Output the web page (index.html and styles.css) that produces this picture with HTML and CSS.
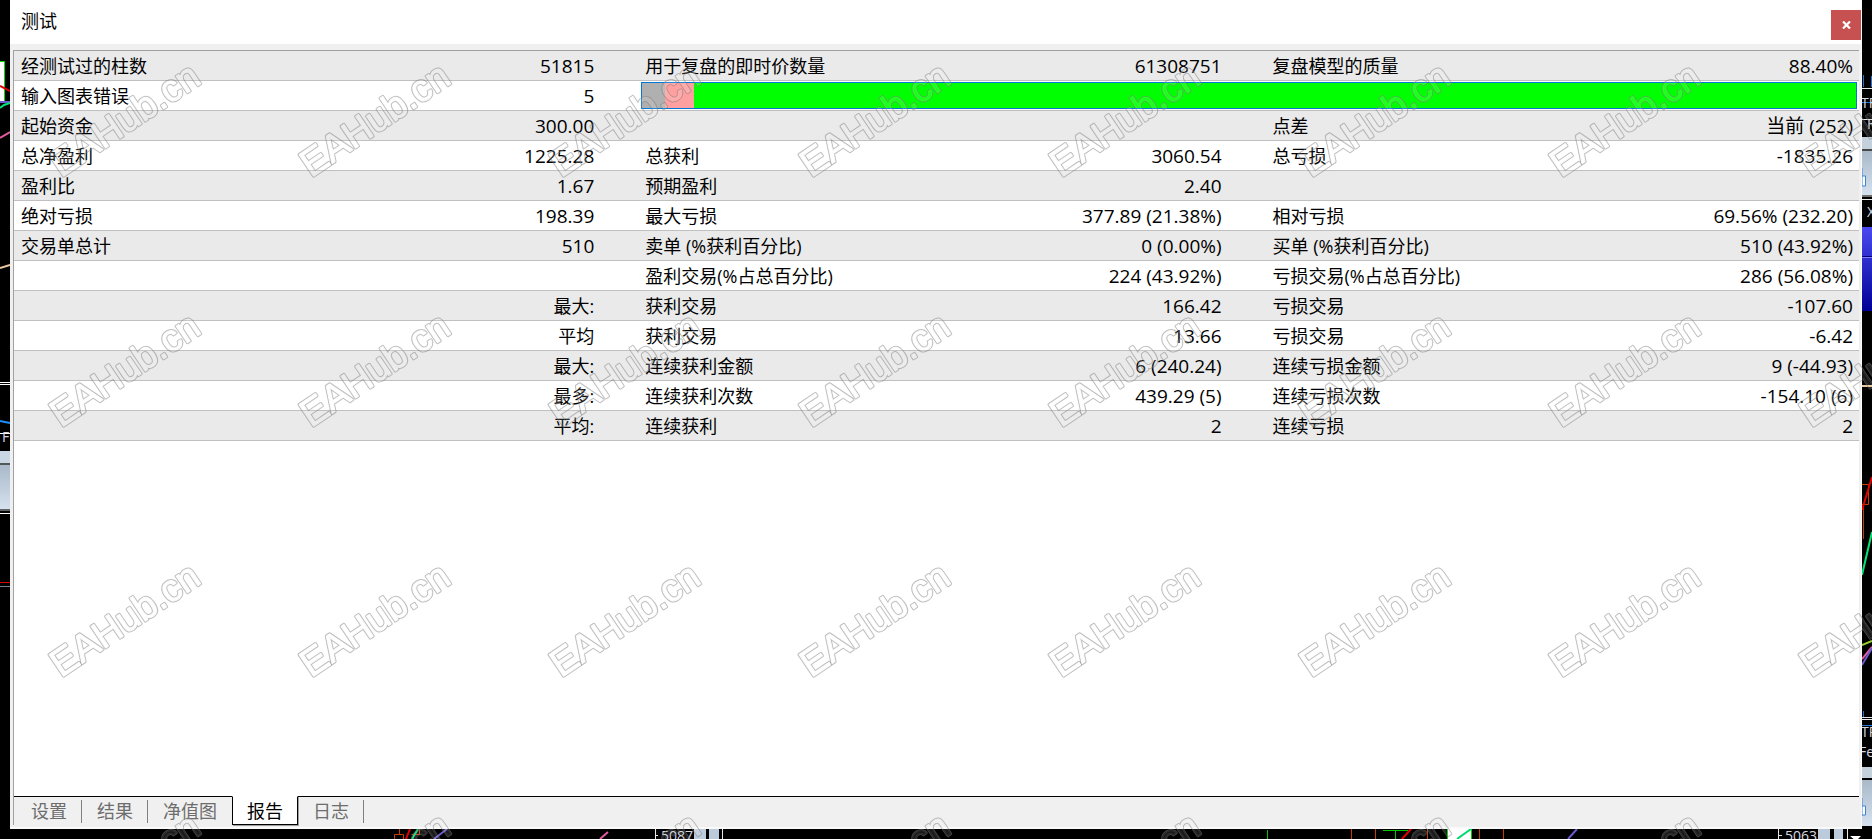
FILE: index.html
```html
<!DOCTYPE html>
<html lang="zh-CN">
<head>
    <meta charset="UTF-8">
    <meta name="viewport" content="width=device-width, initial-scale=1.0">
    <title>测试</title>
    <link rel="stylesheet" href="styles.css">
</head>
<body>
    <!-- chart edges behind the tester window -->
    <svg class="chart chart-left" aria-hidden="true">
        <defs>
            <linearGradient id="steel" x1="0" y1="0" x2="0" y2="1">
                <stop offset="0" stop-color="#a9b9c9"/>
                <stop offset="1" stop-color="#d5e1ee"/>
            </linearGradient>
            <linearGradient id="caption" x1="0" y1="0" x2="0" y2="1">
                <stop offset="0" stop-color="#4a4af0"/>
                <stop offset="1" stop-color="#000096"/>
            </linearGradient>
        </defs>
        <path d="M-2 61.500H4.500V102H-2z" fill="#fff" stroke="#00e000"/>
        <g fill="none" stroke-width="2">
            <path d="M0 86l10 5" stroke="#e00000"/>
            <path d="M0 102h10" stroke="#6a5acd"/>
            <path d="M0 108l4-3 6-2" stroke="#00e676"/>
            <path d="M0 138l10-6" stroke="#e85aa0"/>
            <path d="M0 268l10-3" stroke="#e8c8a0"/>
            <path d="M0 421l10 2" stroke="#1e90ff"/>
        </g>
        <path d="M0 382.500h10M0 384.500h10M0 433.500h10M0 513.500h10" stroke="#fff"/>
        <text x="2" y="442" class="chart-text">F</text>
        <rect y="451" width="10" height="12" fill="#c9d6e4"/>
        <rect y="463" width="10" height="2" fill="#505858"/>
        <rect y="465" width="10" height="44" fill="url(#steel)"/>
        <rect y="509" width="10" height="2" fill="#606468"/>
        <path d="M0 582.500h10" stroke="#e00000"/>
        <path d="M0 586.500h10" stroke="#708090"/>
    </svg>

    <main class="window">
        <header class="title-bar">
            <h1 class="title">测试</h1>
            <button class="close" type="button" aria-label="关闭">
                <svg width="9" height="8" viewBox="0 0 9 8"><path d="M1 0.500l7 7M8 0.500l-7 7" stroke="#fff" stroke-width="2.200"/></svg>
            </button>
        </header>

        <section class="panel">
            <div class="report">
                <table class="report-table">
                    <colgroup>
                        <col class="col-label"><col class="col-value">
                        <col class="col-label"><col class="col-value">
                        <col class="col-label"><col class="col-last">
                    </colgroup>
                    <tbody>
                        <tr><th>经测试过的柱数</th><td>51815</td><th>用于复盘的即时价数量</th><td>61308751</td><th>复盘模型的质量</th><td>88.40%</td></tr>
                        <tr>
                            <th>输入图表错误</th><td>5</td>
                            <td class="quality-cell" colspan="4">
                                <div class="quality">
                                    <span class="quality-none" style="width: 1.9%"></span>
                                    <span class="quality-low" style="width: 2.4%"></span>
                                </div>
                            </td>
                        </tr>
                        <tr><th>起始资金</th><td>300.00</td><th></th><td></td><th>点差</th><td>当前 (252)</td></tr>
                        <tr><th>总净盈利</th><td>1225.28</td><th>总获利</th><td>3060.54</td><th>总亏损</th><td>-1835.26</td></tr>
                        <tr><th>盈利比</th><td>1.67</td><th>预期盈利</th><td>2.40</td><th></th><td></td></tr>
                        <tr><th>绝对亏损</th><td>198.39</td><th>最大亏损</th><td>377.89 (21.38%)</td><th>相对亏损</th><td>69.56% (232.20)</td></tr>
                        <tr><th>交易单总计</th><td>510</td><th>卖单 (%获利百分比)</th><td>0 (0.00%)</td><th>买单 (%获利百分比)</th><td>510 (43.92%)</td></tr>
                        <tr><th></th><td></td><th>盈利交易(%占总百分比)</th><td>224 (43.92%)</td><th>亏损交易(%占总百分比)</th><td>286 (56.08%)</td></tr>
                        <tr><th></th><td class="caption">最大:</td><th>获利交易</th><td>166.42</td><th>亏损交易</th><td>-107.60</td></tr>
                        <tr><th></th><td class="caption">平均</td><th>获利交易</th><td>13.66</td><th>亏损交易</th><td>-6.42</td></tr>
                        <tr><th></th><td class="caption">最大:</td><th>连续获利金额</th><td>6 (240.24)</td><th>连续亏损金额</th><td>9 (-44.93)</td></tr>
                        <tr><th></th><td class="caption">最多:</td><th>连续获利次数</th><td>439.29 (5)</td><th>连续亏损次数</th><td>-154.10 (6)</td></tr>
                        <tr><th></th><td class="caption">平均:</td><th>连续获利</th><td>2</td><th>连续亏损</th><td>2</td></tr>
                    </tbody>
                </table>
            </div>

            <nav class="tabs">
                <button class="tab" type="button">设置</button>
                <button class="tab" type="button">结果</button>
                <button class="tab no-rule" type="button">净值图</button>
                <button class="tab active" type="button">报告</button>
                <button class="tab" type="button">日志</button>
                <span class="tabs-rest"></span>
            </nav>
        </section>
    </main>

    <svg class="chart chart-right" aria-hidden="true">
        <path d="M1.500 75v12M9.500 76v11M0 102.500h10M1.500 711v6M0 725.500h10" stroke="#1e78d8"/>
        <path d="M0 88.500h10M0 119.500h10M0 199.500h10M0 717.500h10M0 719.500h10" stroke="#e8e8e8"/>
        <text x="-1" y="108" class="chart-text">TF</text>
        <text x="5" y="129" class="chart-text">F</text>
        <rect y="137" width="10" height="12" fill="#c5d0dd"/>
        <rect y="149" width="10" height="2" fill="#484848"/>
        <rect y="151" width="10" height="44" fill="url(#steel)"/>
        <path d="M0 168v18M0 176h3.500v10H0" fill="#fff" stroke="#3c82d2"/>
        <rect y="195" width="10" height="2" fill="#707070"/>
        <text x="5" y="217" class="chart-text">X</text>
        <rect y="227" width="10" height="84" fill="url(#caption)"/>
        <path d="M0 256.500h10" stroke="#000078"/>
        <path d="M0 257.500h10" stroke="#8080ff"/>
        <g fill="none" stroke-width="2">
            <path d="M0 386h10" stroke="#e8c8a0"/>
            <path d="M0 484.500h6.500v20H0M1.500 504v35" stroke="#c83c00" stroke-width="1"/>
            <path d="M0 510l10-33" stroke="#e00000"/>
            <path d="M0 575l10-43" stroke="#00e676"/>
            <path d="M0 645l10-4" stroke="#9acd32"/>
            <path d="M0 659l10-12" stroke="#e85aa0"/>
            <path d="M0 665l10-17" stroke="#6a5acd"/>
        </g>
        <text x="-1" y="737" class="chart-text">TR</text>
        <text x="-3" y="757" class="chart-text">Fe</text>
        <rect y="767" width="10" height="11" fill="#c5d0dd"/>
        <rect y="780" width="10" height="46" fill="url(#steel)"/>
        <path d="M0 798v18M0 806h3.500v9H0" fill="#fff" stroke="#3c82d2"/>
    </svg>

    <svg class="chart chart-bottom" aria-hidden="true">
        <g fill="none" stroke="#c83c00">
            <path d="M394.500 10V5.500h9V10M399.500 0v5M411.500 5.500h8V0M1351.500 0v10M1375.500 0v10M1427.500 0v10M1479.500 0v10M1503.500 0v10"/>
        </g>
        <path d="M1267.500 1v9M1383 1.500h25M1395.500 1v9" stroke="#00c800"/>
        <rect x="1447" width="25" height="10" fill="#fff"/>
        <path d="M1447.500 0v10M1471.500 0v10" stroke="#00c800"/>
        <g fill="none" stroke-width="2">
            <path d="M406 10l4-10M1402 10l9-10" stroke="#e00000"/>
            <path d="M412 10l6-10M1457 10l14-10" stroke="#00d870"/>
            <path d="M434 10l13-10M1568 10l9-10" stroke="#6a5acd"/>
            <path d="M600 10l8-7" stroke="#e85aa0"/>
        </g>
        <path d="M655.500 0v10M655 6.500h3M722.500 0v10M1778.500 0v10M1779 6.500h3M1847.500 0v10" stroke="#e8e8e8"/>
        <text x="661" y="12" class="chart-text">5087</text>
        <text x="1785" y="12" class="chart-text">5063</text>
        <path d="M694 0h12v10h-12zM709 0h10v10h-10zM1818 0h12v10h-12zM1834 0h9v10h-9z" fill="#bccbdc"/>
        <path d="M1850 7h11l-5 5z" fill="#fff"/>
    </svg>

    <!-- tiled watermark over everything -->
    <svg class="watermark" aria-hidden="true">
        <defs>
            <mask id="hollow" maskUnits="userSpaceOnUse" x="0" y="0" width="250" height="250">
                <rect width="250" height="250" fill="#fff"/>
                <text class="mark mark-inner" transform="translate(61 178) rotate(-34)">EAHub.cn</text>
            </mask>
            <pattern id="tile" width="250" height="250" patternUnits="userSpaceOnUse">
                <text class="mark mark-fill" transform="translate(61 178) rotate(-34)">EAHub.cn</text>
                <g mask="url(#hollow)">
                    <text class="mark mark-outer" transform="translate(61 178) rotate(-34)">EAHub.cn</text>
                </g>
            </pattern>
        </defs>
        <rect width="100%" height="100%" fill="url(#tile)"/>
    </svg>
</body>
</html>
```

FILE: styles.css
```css
:root {
    --face: #f0f0f0;
    --stripe: #eaeaea;
    --rule: #c0c0c0;
    --edge: #a0a0a0;
    --close: #c75050;
}

* {
    margin: 0;
    padding: 0;
    box-sizing: border-box;
}

body {
    display: grid;
    grid-template-columns: 10px 1fr 10px;
    grid-template-rows: 1fr 10px;
    height: 100vh;
    overflow: hidden;
    background: #000;
    color: #000;
    font-family: "Open Sans", "Noto Sans CJK SC", sans-serif;
    font-size: 18px;
}

.chart {
    display: block;
    width: 100%;
    height: 100%;
    overflow: hidden;
}

.chart-bottom {
    grid-column: 1 / -1;
}

.chart-text {
    font-family: "Open Sans", sans-serif;
    font-size: 14px;
    fill: #d8d8e0;
}

.window {
    display: flex;
    flex-direction: column;
    background: var(--face);
    border-bottom: 2px solid #fafafa;
    border-right: 1px solid #fafafa;
}

.title-bar {
    display: flex;
    justify-content: space-between;
    align-items: flex-start;
    height: 44px;
    padding-left: 11px;
    background: #fff;
}

.title {
    font-size: 18px;
    font-weight: 400;
    line-height: 42px;
}

.close {
    display: flex;
    align-items: center;
    justify-content: center;
    width: 30px;
    height: 30px;
    margin-top: 10px;
    border: none;
    background: var(--close);
}

.panel {
    flex: 1;
    display: flex;
    flex-direction: column;
    margin: 6px 2px 2px 3px;
    border-top: 1px solid var(--edge);
    border-left: 1px solid var(--edge);
}

.report {
    flex: 1;
    background: #fff;
    border-top: 1px solid var(--rule);
}

.report-table {
    width: 100%;
    margin-top: -1px;
    table-layout: fixed;
    border-collapse: separate;
    border-spacing: 0;
}

.col-label {
    width: 314px;
}

.col-value {
    width: 17%;
}

.col-last {
    width: 15%;
}

.report-table th,
.report-table td {
    height: 30px;
    border-bottom: 1px solid var(--rule);
    line-height: 28px;
    white-space: nowrap;
    font-weight: 400;
}

.report-table th {
    padding-left: 4px;
    text-align: left;
    font-size: 18px;
}

.report-table td {
    padding-right: 47px;
    text-align: right;
    font-size: 19px;
}

.report-table th:first-child {
    padding-left: 7px;
}

.report-table td:last-child {
    padding-right: 6px;
}

.report-table td.caption {
    font-size: 18px;
}

.report-table tr:nth-child(odd) {
    background: var(--stripe);
}

.report-table td.quality-cell {
    padding: 0 2px 0 0;
}

.quality {
    display: flex;
    height: 27px;
    border: 1px solid #0078d7;
    background: #00ff00;
}

.quality-none {
    background: #b0b0b0;
}

.quality-low {
    background: #ffa0a0;
}

.tabs {
    display: flex;
    height: 29px;
}

.tab {
    position: relative;
    padding: 0 15px;
    border: none;
    border-top: 1px solid #000;
    background: none;
    color: #6d6d6d;
    font-family: inherit;
    font-size: 18px;
    line-height: 26px;
}

.tab:first-child {
    padding-left: 17px;
}

/* short divider at the right of each idle tab */
.tab::after {
    content: "";
    position: absolute;
    top: 3px;
    right: 0;
    width: 1px;
    height: 23px;
    background: #808080;
}

.tab.no-rule::after,
.tab.active::after {
    display: none;
}

.tab.active {
    padding: 0 14px;
    border: 1px solid #000;
    border-top-color: #fff;
    background: #fff;
    color: #000;
    line-height: 24px;
    box-shadow: 1px 1px 0 var(--edge);
}

.tabs-rest {
    flex: 1;
    border-top: 1px solid #000;
}

.watermark {
    position: fixed;
    inset: 0;
    width: 100%;
    height: 100%;
    pointer-events: none;
}

.mark {
    font-family: "Liberation Sans", sans-serif;
    font-size: 38px;
    stroke-linejoin: round;
}

.mark-outer {
    fill: #808080;
    fill-opacity: 0.5;
    stroke: #808080;
    stroke-opacity: 0.5;
    stroke-width: 3px;
}

.mark-inner {
    fill: #000;
    stroke: #000;
    stroke-width: 1px;
}

.mark-fill {
    fill: #fff;
    fill-opacity: 0.1;
    stroke: #fff;
    stroke-opacity: 0.1;
    stroke-width: 1px;
}
```
